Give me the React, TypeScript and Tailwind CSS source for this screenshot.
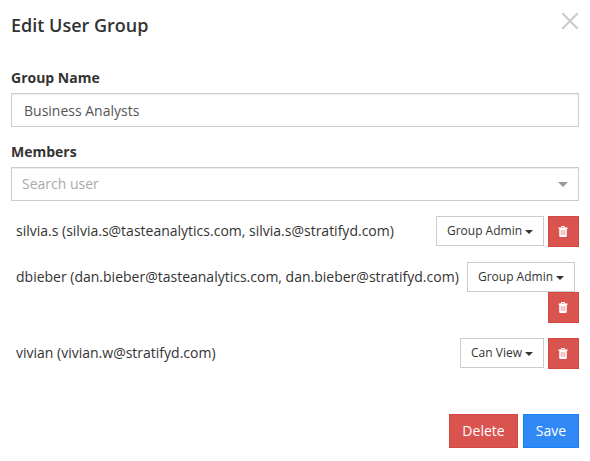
const members = [
  { text: "silvia.s (silvia.s@tasteanalytics.com, silvia.s@stratifyd.com)", role: "Group Admin", h: "h-[46px]", w: "w-[108px]" },
  { text: "dbieber (dan.bieber@tasteanalytics.com, dan.bieber@stratifyd.com)", role: "Group Admin", h: "h-[76px]", w: "w-[108px]" },
  { text: "vivian (vivian.w@stratifyd.com)", role: "Can View", h: "h-[76px]", w: "w-[84px]" },
];
function Trash() {
  return (
    <svg className="mr-px mb-px" width="10" height="11" viewBox="0 0 10 11" fill="#fff">
      <path fillRule="evenodd" d="M3 1Q3.2 0 4 0H6Q6.8 0 7 1L7.2 1.5H9.6V2.7H8.8V9.5Q8.8 11 7.7 11H2.3Q1.2 11 1.2 9.5V2.7H.4V1.5H2.8ZM4 .9L3.8 1.5H6.2L6 .9Z" />
      <path d="M3.3 4V9M5 4V9M6.7 4V9" stroke="#e58f8b" strokeWidth=".8" />
    </svg>
  );
}
export default function App() {
  return (
    <div className="h-[461px] w-[590px] bg-white pr-[11px] pl-[11px] font-['Open_Sans',sans-serif] text-sm text-[#333]">
      <div className="flex h-[68px] items-start justify-between">
        <h1 className="mt-[13px] text-[18px] leading-[25px] font-semibold">Edit User Group</h1>
        <svg className="mt-3" width="18" height="18" viewBox="0 0 18 18" stroke="#ccc" strokeWidth="2.2"><path d="M1.3 1.3L16.7 16.7M16.7 1.3L1.3 16.7" /></svg>
      </div>
      <div className="h-[25px] text-sm leading-5 font-bold">Group Name</div>
      <div className="h-[34px] border border-[#ccc] px-3 text-sm leading-[34px] text-[#555] shadow-[inset_0_1px_1px_rgba(0,0,0,0.075)]">Business Analysts</div>
      <div className="mt-[15px] h-[25px] text-sm leading-5 font-bold">Members</div>
      <div className="flex h-[34px] items-center justify-between border border-[#ccc] px-[10px] text-sm text-[#aaa] shadow-[inset_0_1px_1px_rgba(0,0,0,0.075)]">
        Search user
        <span className="border-x-[5px] border-t-[5px] border-x-transparent border-t-[#999]" />
      </div>
      <div className="pt-[15px]">
        {members.map((m, i) => (
          <div key={m.text} className={`flex items-start justify-between ${m.h}`}>
            <span className="pl-[5px] text-sm leading-[29px] whitespace-nowrap">{m.text}</span>
            <div className={i === 1 ? "flex flex-col items-end" : "flex gap-1"}>
              <button className={`flex h-[30px] items-center justify-center gap-[3px] border border-[#ccc] text-xs ${m.w} ${i === 1 ? "mr-1" : ""}`}>
                {m.role}<span className="mt-0.5 border-x-4 border-t-4 border-x-transparent border-t-[#333]" />
              </button>
              <button className="flex h-[31px] w-[31px] items-center justify-center border border-[#d64742] bg-[#d9534f]"><Trash /></button>
            </div>
          </div>
        ))}
      </div>
      <div className="flex justify-end gap-[5px] text-sm text-white">
        <button className="h-[34px] w-[69px] border border-[#d64742] bg-[#d9534f]">Delete</button>
        <button className="h-[34px] w-[56px] border border-[#1b7ff5] bg-[#3088f5]">Save</button>
      </div>
    </div>
  );
}
